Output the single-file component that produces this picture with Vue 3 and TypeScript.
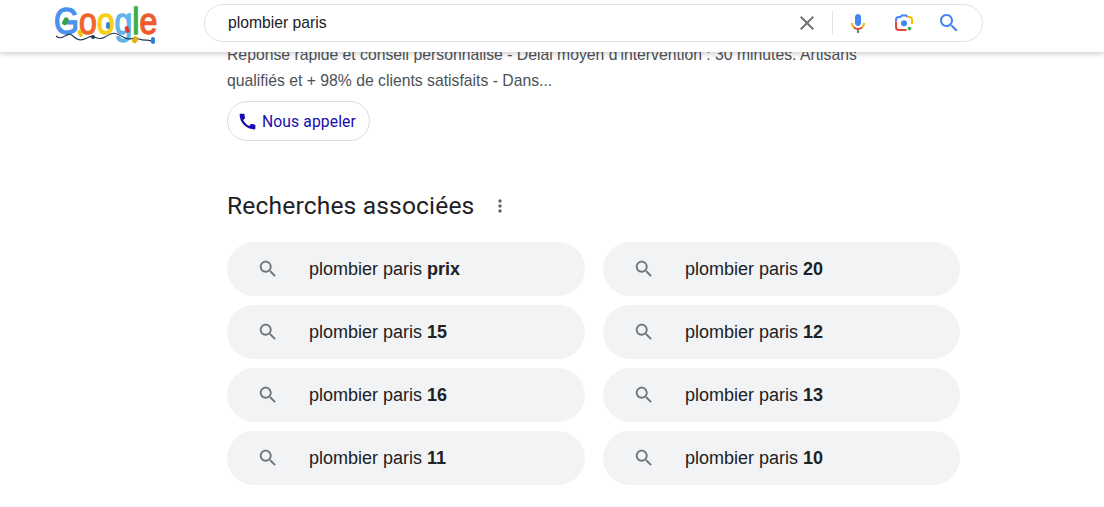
<script setup lang="ts">
interface Item { base: string; bold: string }
const items: Item[] = [
  { base: 'plombier paris', bold: 'prix' },
  { base: 'plombier paris', bold: '20' },
  { base: 'plombier paris', bold: '15' },
  { base: 'plombier paris', bold: '12' },
  { base: 'plombier paris', bold: '16' },
  { base: 'plombier paris', bold: '13' },
  { base: 'plombier paris', bold: '11' },
  { base: 'plombier paris', bold: '10' },
]
const letters = [
  { c: 'G', color: '#4a90ee' },
  { c: 'o', color: '#f0672a' },
  { c: 'o', color: '#fbcf16' },
  { c: 'g', color: '#5fb4ea' },
  { c: 'l', color: '#3fae49' },
  { c: 'e', color: '#ee5a2c' },
]
</script>

<template>
  <div class="page">
    <header class="top">
      <div class="logo" aria-label="Google">
        <span v-for="(l, i) in letters" :key="i" class="letter" :style="{ color: l.color }">{{ l.c }}</span>
        <svg class="lights" width="106" height="46" viewBox="0 0 106 46">
          <path d="M3 30 C10 36 14 24 20 30 S30 34 36 31 S44 36 52 31 S62 26 70 31 S78 30 86 33 S94 32 100 36"
            fill="none" stroke="#233a5c" stroke-width="1.2" />
          <rect x="10" y="11" width="5" height="8" rx="2" fill="#37a04a" transform="rotate(30 12 15)" />
          <rect x="25" y="24" width="4" height="7" rx="2" fill="#f4c20d" transform="rotate(-25 27 27)" />
          <rect x="53" y="16" width="4" height="7" rx="2" fill="#3a86d8" />
          <rect x="72" y="20" width="4" height="7" rx="2" fill="#d93a33" transform="rotate(-20 74 23)" />
          <rect x="80" y="30" width="5" height="7" rx="2" fill="#e3b008" transform="rotate(30 82 33)" />
          <rect x="98" y="31" width="4" height="7" rx="2" fill="#2f7fd8" />
          <circle cx="40" cy="31" r="2" fill="#233a5c" />
        </svg>
      </div>
      <div class="search">
        <span class="query">plombier paris</span>
        <button class="ic close" aria-label="Effacer">
          <svg width="24" height="24" viewBox="0 0 24 24"><path fill="#70757a" d="M19 6.41 17.59 5 12 10.59 6.41 5 5 6.41 10.59 12 5 17.59 6.41 19 12 13.41 17.59 19 19 17.59 13.41 12z"/></svg>
        </button>
        <span class="sep"></span>
        <button class="ic mic" aria-label="Micro">
          <svg width="24" height="24" viewBox="0 0 24 24">
            <path fill="#4285f4" d="M12 15c1.66 0 3-1.31 3-2.97V6c0-1.66-1.34-3-3-3S9 4.34 9 6v6.03C9 13.69 10.34 15 12 15z"/>
            <path fill="#34a853" d="M11 18.08h2V22h-2z"/>
            <path fill="#f4b400" d="M7.05 16.87c-1.27-1.33-2.05-2.83-2.05-4.87h2c0 1.45.56 2.42 1.47 3.38z"/>
            <path fill="#ea4335" d="M12 16.93c-1.36 0-2.67-.5-3.53-1.55l-1.42 1.49c1.28 1.33 3 2.13 4.95 2.13z"/>
            <path fill="#ea4335" d="M12 16.93c1.36 0 2.67-.5 3.53-1.55l1.42 1.49c-1.28 1.33-3 2.13-4.95 2.13z"/>
            <path fill="#f4b400" d="M16.95 16.87c1.27-1.33 2.05-2.83 2.05-4.87h-2c0 1.45-.56 2.42-1.47 3.38z"/>
          </svg>
        </button>
        <button class="ic lens" aria-label="Lens">
          <svg width="24" height="24" viewBox="0 0 24 24">
            <circle cx="12" cy="12.2" r="3" fill="#4285f4"/>
            <circle cx="17.5" cy="17.6" r="1.8" fill="#34a853"/>
            <path fill="none" stroke="#4285f4" stroke-width="2" d="M4 10.5V9a3 3 0 0 1 3-3h1.5l1.2-1.5h4.6L15.5 6"/>
            <path fill="none" stroke="#fbbc04" stroke-width="2" d="M15.5 6H17a3 3 0 0 1 3 3v4"/>
            <path fill="none" stroke="#ea4335" stroke-width="2" d="M4 10.5V16a3 3 0 0 0 3 3h7.5"/>
          </svg>
        </button>
        <button class="ic go" aria-label="Rechercher">
          <svg width="24" height="24" viewBox="0 0 24 24"><path fill="#4285f4" d="M15.5 14h-.79l-.28-.27C15.41 12.59 16 11.11 16 9.5 16 5.91 13.09 3 9.5 3S3 5.91 3 9.5 5.91 16 9.5 16c1.61 0 3.09-.59 4.23-1.57l.27.28v.79l5 4.99L20.49 19l-4.99-5zm-6 0C7.01 14 5 11.99 5 9.5S7.01 5 9.5 5 14 7.01 14 9.5 11.99 14 9.5 14z"/></svg>
        </button>
      </div>
    </header>

    <main class="content">
      <p class="snippet">Réponse rapide et conseil personnalisé - Délai moyen d'intervention : 30 minutes. Artisans qualifiés et + 98% de clients satisfaits - Dans...</p>
      <a class="call">
        <svg width="21" height="21" viewBox="0 0 24 24"><path fill="#1a0dab" d="M20.01 15.38c-1.23 0-2.42-.2-3.53-.56-.35-.12-.74-.03-1.01.24l-1.57 1.97c-2.83-1.35-5.48-3.9-6.89-6.83l1.95-1.66c.27-.28.35-.67.24-1.02-.37-1.11-.56-2.3-.56-3.53 0-.54-.45-.99-.99-.99H4.19C3.65 3 3 3.24 3 3.99 3 13.28 10.73 21 20.01 21c.71 0 .99-.63.99-1.18v-3.45c0-.54-.45-.99-.99-.99z"/></svg>
        <span>Nous appeler</span>
      </a>

      <div class="head">
        <h2>Recherches associées</h2>
        <svg width="20" height="20" viewBox="0 0 24 24"><path fill="#5f6368" d="M12 8c1.1 0 2-.9 2-2s-.9-2-2-2-2 .9-2 2 .9 2 2 2zm0 2c-1.1 0-2 .9-2 2s.9 2 2 2 2-.9 2-2-.9-2-2-2zm0 6c-1.1 0-2 .9-2 2s.9 2 2 2 2-.9 2-2-.9-2-2-2z"/></svg>
      </div>

      <div class="grid">
        <a v-for="it in items" :key="it.bold" class="chip">
          <svg width="22" height="22" viewBox="0 0 24 24"><path fill="#70757a" d="M15.5 14h-.79l-.28-.27C15.41 12.59 16 11.11 16 9.5 16 5.91 13.09 3 9.5 3S3 5.91 3 9.5 5.91 16 9.5 16c1.61 0 3.09-.59 4.23-1.57l.27.28v.79l5 4.99L20.49 19l-4.99-5zm-6 0C7.01 14 5 11.99 5 9.5S7.01 5 9.5 5 14 7.01 14 9.5 11.99 14 9.5 14z"/></svg>
          <span class="label">{{ it.base }} <b>{{ it.bold }}</b></span>
        </a>
      </div>
    </main>
  </div>
</template>

<style>
html, body { margin: 0; background: #fff; overflow: hidden; }
</style>

<style scoped>
.page {
  position: relative;
  width: 1104px;
  height: 507px;
  overflow: hidden;
  background: #fff;
  font-family: "Liberation Sans", Arial, sans-serif;
}
.top {
  position: absolute;
  top: 0;
  left: 0;
  right: 0;
  height: 52px;
  background: #fff;
  box-shadow: 0 1px 6px rgba(32, 33, 36, 0.28);
  display: flex;
  align-items: flex-start;
  z-index: 2;
}
.logo {
  position: relative;
  display: flex;
  width: 105px;
  height: 40px;
  margin: 7px 0 0 54px;
  font-size: 32px;
  line-height: 32px;
}
.letter {
  display: block;
  height: 40px;
  transform: scaleY(1.15);
  transform-origin: 0 27px;
  -webkit-text-stroke: 1.2px currentColor;
}
.lights { position: absolute; top: -1px; left: -1px; }
.search {
  box-sizing: border-box;
  width: 779px;
  height: 38px;
  margin: 4px 0 0 45px;
  border: 1px solid #dfe1e5;
  border-radius: 19px;
  background: #fff;
  display: flex;
  align-items: center;
  padding-left: 23px;
}
.query { flex: 1; font-size: 15.7px; color: #202124; }
.ic {
  border: 0;
  background: none;
  padding: 0;
  width: 24px;
  height: 24px;
  display: flex;
}
.sep { width: 1px; height: 24px; background: #dfe1e5; margin: 0 13px; }
.lens { margin-left: 22px; }
.go { margin: 0 21px 0 21px; }
.content { padding: 42px 0 0 227px; width: 733px; }
.snippet {
  margin: 0;
  width: 640px;
  font-size: 15.75px;
  line-height: 26px;
  color: #4d5156;
}
.call {
  box-sizing: border-box;
  display: inline-flex;
  align-items: center;
  gap: 4px;
  height: 40px;
  margin-top: 7px;
  padding: 0 13px 0 9px;
  border: 1px solid #dadce0;
  border-radius: 20px;
  font-family: Roboto, "Liberation Sans", sans-serif;
  font-size: 15.7px;
  letter-spacing: 0.1px;
  color: #1a0dab;
}
.head { display: flex; align-items: center; gap: 16px; margin-top: 45px; height: 40px; }
h2 {
  margin: 0;
  font-family: Roboto, "Liberation Sans", sans-serif;
  font-size: 24.6px;
  letter-spacing: 0.15px;
  font-weight: 400;
  color: #202124;
  line-height: 40px;
}
.grid {
  display: grid;
  grid-template-columns: 358px 357px;
  column-gap: 18px;
  row-gap: 9px;
  margin-top: 16px;
}
.chip {
  height: 54px;
  border-radius: 27px;
  background: #f1f3f4;
  display: flex;
  align-items: center;
  padding-left: 30px;
  gap: 30px;
  font-size: 18px;
  color: #202124;
}
b { font-weight: 700; }
</style>
